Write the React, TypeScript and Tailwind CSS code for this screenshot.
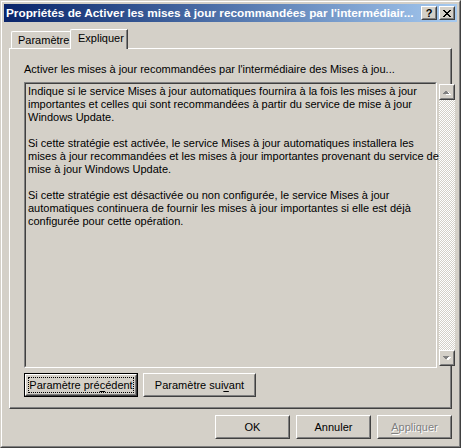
import type { ReactNode } from 'react'

const face = 'bg-[#d4d0c8]'

function Raised({ children, className = '' }: { children: ReactNode; className?: string }) {
  return (
    <div className={`border border-t-white border-l-white border-r-[#404040] border-b-[#404040] ${className}`}>
      <div className="h-full w-full border border-t-[#d4d0c8] border-l-[#d4d0c8] border-r-[#808080] border-b-[#808080] flex items-center justify-center">
        {children}
      </div>
    </div>
  )
}

function Button({
  children,
  width,
  isDefault,
}: {
  children: ReactNode
  width: string
  isDefault?: boolean
}) {
  if (isDefault) {
    return (
      <div className={`${width} h-[24px] border border-black`}>
        <Raised className="h-full w-full">
          <div className="m-[1px] self-stretch flex-1 border border-dotted border-black leading-[13px] flex items-center justify-center">
            {children}
          </div>
        </Raised>
      </div>
    )
  }
  return (
    <Raised className={`${width} h-[24px]`}>
      <span className="leading-[13px]">{children}</span>
    </Raised>
  )
}

function Arrow({ up }: { up?: boolean }) {
  return (
    <svg width="9" height="6" viewBox="0 0 9 6" shapeRendering="crispEdges">
      {up ? (
        <>
          <polygon points="2,5 5,2 8,5" fill="#fff" transform="translate(1,1)" />
          <polygon points="1,5 4,1.5 7,5" fill="#808080" />
        </>
      ) : (
        <>
          <polygon points="2,1 5,4.5 8,1" fill="#fff" transform="translate(1,1)" />
          <polygon points="1,1 4,4.5 7,1" fill="#808080" />
        </>
      )}
    </svg>
  )
}

export default function App() {
  const lines = [
    'Indique si le service Mises à jour automatiques fournira à la fois les mises à jour',
    'importantes et celles qui sont recommandées à partir du service de mise à jour',
    'Windows Update.',
    '',
    'Si cette stratégie est activée, le service Mises à jour automatiques installera les',
    'mises à jour recommandées et les mises à jour importantes provenant du service de',
    'mise à jour Windows Update.',
    '',
    'Si cette stratégie est désactivée ou non configurée, le service Mises à jour',
    'automatiques continuera de fournir les mises à jour importantes si elle est déjà',
    'configurée pour cette opération.',
  ]

  return (
    <div className={`w-[461px] h-[448px] ${face} text-[11px] text-black font-['Liberation_Sans',Arial,sans-serif] border border-t-[#d4d0c8] border-l-[#d4d0c8] border-r-[#404040] border-b-[#404040]`}>
      <div className="h-full w-full border border-t-white border-l-white border-r-[#808080] border-b-[#808080] p-[2px] flex flex-col">
        {/* title bar */}
        <div className="h-[18px] flex items-center pl-[2px] pr-[2px] bg-gradient-to-r from-[#0a246a] to-[#a6caf0]">
          <div className="flex-1 text-white font-bold text-[11.8px] whitespace-nowrap overflow-hidden leading-[14px]">
            Propriétés de Activer les mises à jour recommandées par l'intermédiair...
          </div>
          <Raised className="w-[16px] h-[14px] bg-[#d4d0c8]">
            <span className="font-bold text-[11px] leading-[10px]">?</span>
          </Raised>
          <Raised className="w-[16px] h-[14px] bg-[#d4d0c8] ml-[2px]">
            <svg width="8" height="7" viewBox="0 0 8 7" shapeRendering="crispEdges">
              <path d="M0 0h2v1h-2zM6 0h2v1h-2zM1 1h2v1h-2zM5 1h2v1h-2zM2 2h4v1h-4zM3 3h2v1h-2zM2 4h4v1h-4zM1 5h2v1h-2zM5 5h2v1h-2zM0 6h2v1h-2zM6 6h2v1h-2z" fill="#000" />
            </svg>
          </Raised>
        </div>

        <div className="flex-1 px-[5px] pt-[7px] flex flex-col">
          {/* tabs */}
          <div className="flex items-end h-[19px] pl-[2px]">
            <div className="w-[59px] h-[17px] border-l border-t border-white rounded-tl-[2px] pl-[6px] leading-[15px] pt-[1px]">
              Paramètre
            </div>
            <div className={`relative z-10 -mb-[1px] w-[58px] h-[20px] ${face} border-l border-t border-white rounded-tl-[2px] border-r border-r-[#404040] pl-[7px] leading-[15px] pt-[1px] shadow-[inset_-1px_0_0_#808080]`}>
              Expliquer
            </div>
          </div>

          {/* panel */}
          <div className="h-[361px] border-l border-t border-white border-r border-b border-r-[#404040] border-b-[#404040]">
            <div className="h-full border-r border-b border-r-[#808080] border-b-[#808080] px-[14px] pt-[14px] flex flex-col">
              <div className="leading-[13px] h-[13px] whitespace-nowrap">
                Activer les mises à jour recommandées par l'intermédiaire des Mises à jou...
              </div>
              <div className="mt-[6px] h-[286px] w-[413px] border border-t-[#808080] border-l-[#808080] border-r-white border-b-white">
                <div className="h-full border border-t-[#404040] border-l-[#404040] border-r-[#d4d0c8] border-b-[#d4d0c8] flex">
                  <div className="flex-1 pl-[2px] pt-[1px] leading-[13px] whitespace-nowrap">
                    {lines.map((l, i) => (
                      <div key={i} className="h-[13px]">
                        {l}
                      </div>
                    ))}
                  </div>
                  <div className="w-[16px] flex flex-col bg-[repeating-conic-gradient(#ffffff_0_25%,#d4d0c8_0_50%)] bg-[length:2px_2px]">
                    <Raised className={`w-[16px] h-[16px] ${face}`}>
                      <Arrow up />
                    </Raised>
                    <div className="flex-1" />
                    <Raised className={`w-[16px] h-[16px] ${face}`}>
                      <Arrow />
                    </Raised>
                  </div>
                </div>
              </div>
              <div className="mt-[5px] flex gap-[5px]">
                <Button width="w-[114px]" isDefault>
                  Paramètre pré<span className="underline underline-offset-2">c</span>édent
                </Button>
                <Button width="w-[113px]">
                  Paramètre sui<span className="underline underline-offset-2">v</span>ant
                </Button>
              </div>
            </div>
          </div>

          {/* bottom buttons */}
          <div className="mt-[6px] flex justify-end gap-[6px]">
            <Button width="w-[75px]">OK</Button>
            <Button width="w-[75px]">Annuler</Button>
            <Button width="w-[75px]">
              <span className="text-[#808080] [text-shadow:1px_1px_0_#fff]">
                <span className="underline underline-offset-2">A</span>ppliquer
              </span>
            </Button>
          </div>
        </div>
      </div>
    </div>
  )
}
